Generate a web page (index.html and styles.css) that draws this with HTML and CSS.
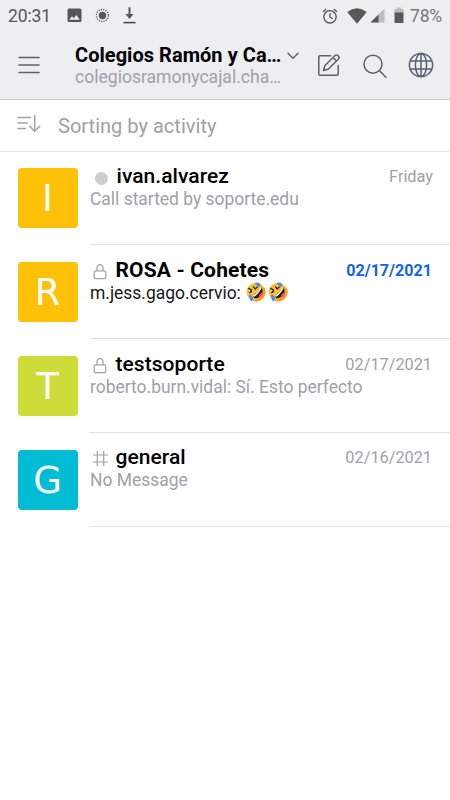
FILE: index.html
```html
<!DOCTYPE html>
<html lang="es">
<head>
<meta charset="utf-8">
<title>Rooms</title>
<link rel="stylesheet" href="styles.css">
</head>
<body>
<svg class="defs" aria-hidden="true">
  <symbol id="lock" viewBox="0 0 14 18"><path d="M1.2 9.2Q1.2 7.8 2.6 7.8H11.4Q12.8 7.8 12.8 9.2V14.3Q12.8 15.7 11.4 15.7H2.6Q1.2 15.7 1.2 14.3ZM4 7.8V4.8C4 .5 10 .5 10 4.8V7.8"/></symbol>
  <symbol id="rofl" viewBox="0 0 20 20">
    <circle cx="10" cy="10" r="9.3" fill="#fbc02d"/>
    <path d="M18 5A9.3 9.3 0 0 1 7 18.8Q15 17 18 5Z" fill="#f59a23"/>
    <path d="M16 5.5C18 11 14 17 8 16.2C6.8 13 9 11.8 11.4 10.2C13.4 8.8 13.2 6 16 5.5Z" fill="#1c1b25"/>
    <path d="M15.8 5.7Q12.5 12 8.2 14.8L7.4 13.2Q12.5 10.5 14 5.8Z" fill="#fff"/>
    <path d="M16.8 10Q17 14.5 12.5 15.8Q12.5 12 16.8 10Z" fill="#f04b50"/>
    <path d="M2.2 6.2L5.4 7.8L4.4 10.8M7.2 4.5L9.3 7L11.6 4.8M3 10.6L6.1 9.5" fill="none" stroke="#30283c" stroke-width="1.3"/>
    <path d="M8.5 1.3Q12.5-.5 14.3 2.2Q14.8 4.5 12.8 5Q10 3.2 8.5 1.3ZM3.2 12.2Q6 13 7 15.8Q7.6 19 5.4 19.3Q2.8 18 3.2 12.2Z" fill="#5288f5"/>
  </symbol>
</svg>
<header class="top">
  <div class="status">
    <span class="clock">20:31</span>
    <svg class="s-image" width="15" height="15" viewBox="0 0 15 15"><path fill="#555756" fill-rule="evenodd" d="M2 .5H13Q14.5.5 14.5 2V12.5Q14.5 14 13 14H2Q.5 14 .5 12.5V2Q.5.5 2 .5ZM2.2 11.8H12.8L9.4 7L6.8 10.3L5 8.3Z"/></svg>
    <svg class="s-sun" width="15" height="15" viewBox="0 0 15 15"><circle cx="7.5" cy="7.5" r="3.7" fill="#555756"/><circle cx="7.5" cy="7.5" r="6" fill="none" stroke="#555756" stroke-width="1.4" stroke-dasharray="1.1 1.256"/></svg>
    <svg class="s-down" width="13" height="17" viewBox="0 0 13 17"><path d="M6.5.3V9" stroke="#555756" stroke-width="2" fill="none"/><path d="M2.4 7H10.6L6.5 12Z" fill="#555756"/><path d="M.5 15.6H12.5" stroke="#444" stroke-width="1.5"/></svg>
    <svg class="s-alarm" width="16" height="16" viewBox="0 0 16 16" fill="none" stroke="#4d4f50" stroke-width="1.3"><circle cx="8" cy="8.8" r="6.2"/><path d="M1 3.7L4.3 1M15 3.7L11.7 1M8 5.2V9.2L10.8 10.8"/></svg>
    <svg class="s-wifi" width="20" height="16" viewBox="0 0 20 16"><path d="M.2 4Q10-3.3 19.8 4L10 15.7Z" fill="#565958"/></svg>
    <svg class="s-signal" width="15" height="15" viewBox="0 0 15 15"><path d="M.5 14.5L14.5.5V14.5Z" fill="#bdbebf"/><path d="M.5 14.5L8.5 6.5V14.5Z" fill="#565958"/></svg>
    <svg class="s-battery" width="10" height="17" viewBox="0 0 10 17"><path d="M3 .5H7V2H9.5V6H.5V2H3Z" fill="#b9babb"/><path d="M.5 5.5H9.5V16H.5Z" fill="#565958"/></svg>
    <span class="percent">78%</span>
  </div>
  <div class="nav">
    <svg class="menu" width="22" height="18" viewBox="0 0 22 18"><path d="M1 1.5H21M1 9H21M1 16.5H21"/></svg>
    <div class="server">
      <div class="name"><span class="name-text">Colegios Ramón y Ca…</span><svg class="chevron" width="12" height="8" viewBox="0 0 12 8"><path d="M1 1.2L6 6.2L11 1.2"/></svg></div>
      <div class="host">colegiosramonycajal.cha…</div>
    </div>
    <svg class="edit" width="24" height="24" viewBox="0 0 24 24"><path d="M13.5 2.8H3Q1.8 2.8 1.8 4V21Q1.8 22.2 3 22.2H20Q21.2 22.2 21.2 21V12.5M6.5 17.5L7.8 12.7L18 2.5Q19.5 1.3 21.3 2.8Q22.8 4.5 21.3 6.2L11.2 16.2ZM16 4.5L19.6 8"/></svg>
    <svg class="search" width="24" height="24" viewBox="0 0 24 24"><circle cx="10" cy="10.2" r="9"/><path d="M16.5 16.8L23 23.2"/></svg>
    <svg class="globe" width="26" height="26" viewBox="0 0 26 26"><circle cx="13" cy="13" r="11.6"/><ellipse cx="13" cy="13" rx="5.6" ry="11.6"/><path d="M13 1.4V24.6M2.5 9H23.5M2.5 17H23.5"/></svg>
  </div>
</header>
<div class="sort">
  <svg width="24" height="19" viewBox="0 0 24 19"><path d="M1 2.5H13.5M1 8H10.5M1 13.5H8.5M17.7.5V16M12.7 11.3L17.7 16.3L22.7 11.3"/></svg>
  <span class="sort-text">Sorting by activity</span>
</div>
<main>
  <section class="room">
    <div class="avatar amber">I</div>
    <div class="body">
      <div class="line"><span class="icon"><i class="dot"></i></span><span class="title direct">ivan.alvarez</span><span class="date friday">Friday</span></div>
      <div class="preview">Call started by soporte.edu</div>
    </div>
  </section>
  <section class="room unread">
    <div class="avatar amber">R</div>
    <div class="body">
      <div class="line"><span class="icon"><svg class="lock" width="14" height="18"><use href="#lock"/></svg></span><span class="title">ROSA - Cohetes</span><span class="date">02/17/2021</span></div>
      <div class="preview"><span>m.jess.gago.cervio:</span><svg class="emoji first" width="20" height="20"><use href="#rofl"/></svg><svg class="emoji" width="20" height="20"><use href="#rofl"/></svg></div>
    </div>
  </section>
  <section class="room">
    <div class="avatar lime">T</div>
    <div class="body">
      <div class="line"><span class="icon"><svg class="lock" width="14" height="18"><use href="#lock"/></svg></span><span class="title">testsoporte</span><span class="date">02/17/2021</span></div>
      <div class="preview">roberto.burn.vidal: Sí. Esto perfecto</div>
    </div>
  </section>
  <section class="room">
    <div class="avatar cyan">G</div>
    <div class="body">
      <div class="line"><span class="icon"><svg class="hash" width="17" height="17" viewBox="0 0 17 17"><path d="M5.3 1V16M11.7 1V16M1 5H16M1 12H16"/></svg></span><span class="title">general</span><span class="date">02/16/2021</span></div>
      <div class="preview">No Message</div>
    </div>
  </section>
</main>
</body>
</html>
```

FILE: styles.css
```css
* { box-sizing: border-box; }
body { margin: 0; width: 450px; height: 800px; overflow: hidden; background: #fff; font-family: Roboto, "Liberation Sans", sans-serif; color: #0c0d0f; }
svg { display: block; flex: none; }
.defs { width: 0; height: 0; position: absolute; }
.top { height: 100px; background: #edeef0; border-bottom: 1px solid #c8cacc; }
.status { height: 31px; display: flex; align-items: center; padding-left: 8px; color: #555756; font-size: 17.5px; white-space: nowrap; }
.clock { width: 59px; letter-spacing: -.1px; }
.s-sun { margin-left: 13px; }
.s-down { margin-left: 13px; }
.s-alarm { margin-left: 186px; }
.s-wifi { margin-left: 9px; }
.s-signal { margin-left: 3px; }
.s-battery { margin-left: 9px; }
.percent { margin-left: 6px; color: #777a7b; font-size: 17.5px; letter-spacing: -.2px; }
.nav { height: 68px; display: flex; padding-left: 18px; }
.nav svg { fill: none; stroke: #586270; stroke-width: 1.5; stroke-linecap: round; stroke-linejoin: round; }
.menu { margin-top: 25px; }
.server { margin-left: 35px; width: 242px; white-space: nowrap; padding-top: 12px; }
.name { display: flex; align-items: center; gap: 6px; font-size: 20px; line-height: 24px; font-weight: 700; color: #000; }
.name-text { width: 206px; letter-spacing: .04px; }
.chevron { margin-top: 2px; }
.host { font-size: 17.6px; line-height: 20px; color: #9ea2a8; letter-spacing: -.02px; }
.edit { margin-top: 22px; }
.search { margin-top: 23px; margin-left: 22px; }
.globe { margin-top: 21px; margin-left: 21px; }
.sort { height: 51.5px; display: flex; padding-left: 17px; border-bottom: 1px solid #e1e3e5; color: #9ca2a8; }
.sort svg { margin-top: 15px; fill: none; stroke: #9ca2a8; stroke-width: 1.5; stroke-linecap: round; stroke-linejoin: round; }
.sort-text { margin-left: 17px; font-size: 20px; line-height: 52px; letter-spacing: .02px; }
.room { display: flex; height: 93.75px; padding-left: 17.5px; }
.avatar { width: 60px; height: 60px; margin-top: 16.8px; border-radius: 4px; color: #fff; font: 37px/62px "DejaVu Sans", sans-serif; text-align: center; }
.amber { background: #ffc107; }
.lime { background: #cddc39; }
.cyan { background: #00bcd4; }
.body { flex: 1; margin-left: 12.5px; border-bottom: 1px solid #dfe1e3; padding-top: 12.5px; white-space: nowrap; }
.line { display: flex; height: 24px; padding-right: 18px; line-height: 24px; }
.icon { width: 25.5px; flex: none; }
.dot { display: block; width: 13px; height: 13px; border-radius: 50%; background: #cbced1; margin: 7.5px 0 0 5px; }
.lock { margin: 5px 0 0 3px; fill: none; stroke: #9ca2a8; stroke-width: 1.2; }
.hash { margin: 5px 0 0 2px; fill: none; stroke: #9ca2a8; stroke-width: 1.2; }
.title { font-size: 21px; font-weight: 500; color: #000; letter-spacing: .05px; }
.direct { margin-left: 1px; }
.date { margin-left: auto; font-size: 16.3px; line-height: 25px; color: #9ca2a8; }
.friday { margin-right: -1px; }
.unread .title { font-weight: 700; letter-spacing: .15px; }
.preview { display: flex; height: 22px; line-height: 22px; font-size: 17.45px; color: #9ca2a8; }
.unread .date { color: #1063ef; font-weight: 700; font-size: 16.1px; }
.unread .preview { color: #15171b; }
.emoji { margin-left: 2px; margin-top: 0; }
.emoji.first { margin-left: 5px; }
```
